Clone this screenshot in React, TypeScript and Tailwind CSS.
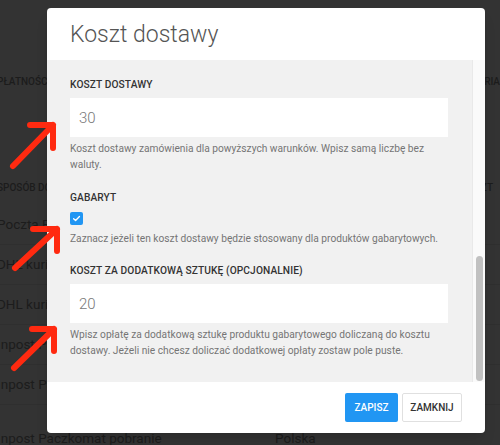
import React from "react";

const deliveryRows = [
  "Poczta Polska",
  "DHL kurier",
  "DHL kurier pobranie",
  "Inpost Paczkomat",
  "Inpost Paczkomat 24/7",
];

const Field = ({ label, value, help }: { label: string; value: string; help: string }) => (
  <div>
    <div className="text-[10.2px] leading-4 font-medium uppercase text-[#333] tracking-[0.1px]">{label}</div>
    <input
      defaultValue={value}
      className="mt-[5px] block w-full h-[39px] bg-white px-[9px] text-[15px] font-light text-[#777] outline-none"
    />
    <p className="mt-[4px] text-[10.2px] leading-4 text-[#757575]">{help}</p>
  </div>
);

const App = () => {
  return (
    <div className="relative w-[500px] h-[445px] overflow-hidden bg-[#333] font-['Roboto',sans-serif]">
      {/* page behind the dimmed overlay */}
      <div className="pt-[73px] -ml-[3px] text-[#1c1c1c] whitespace-nowrap">
        <div className="flex h-4 items-center text-[10px] uppercase font-medium">
          <div className="w-[278px]">Płatności</div>
          <div className="w-[212px]">Kraj</div>
          <div>Kategoria</div>
        </div>
        <div className="mt-[90px] flex h-4 items-center text-[10px] uppercase font-medium">
          <div className="w-[278px]">Sposób dostawy</div>
          <div className="w-[212px]">Kraj</div>
          <div className="w-[6px] flex justify-end">Koszt</div>
        </div>
        <div className="mt-[10px]">
          {deliveryRows.map((row) => (
            <div key={row} className="flex h-10 items-center text-[13.5px] border-b border-[#2f2f2f]">
              <div className="w-[278px]">{row}</div>
              <div>Polska</div>
            </div>
          ))}
          <div className="flex h-10 items-center text-[13.5px] mt-[13px]">
            <div className="w-[278px]">Inpost Paczkomat pobranie</div>
            <div>Polska</div>
          </div>
        </div>
      </div>

      {/* modal */}
      <div className="absolute left-[47px] top-[8px] w-[438px] h-[425px] bg-white rounded-[4px] flex flex-col overflow-hidden shadow-lg">
        <div className="h-[52px] shrink-0 px-[23px] flex items-center">
          <h2 className="text-[23px] leading-none font-light text-[#555]">Koszt dostawy</h2>
        </div>

        <div className="flex flex-1 min-h-0 bg-[#f1f1f1]">
          <div className="flex-1 pl-[23px] pr-[24px] pt-[17px]">
            <Field
              label="Koszt dostawy"
              value="30"
              help="Koszt dostawy zamówienia dla powyższych warunków. Wpisz samą liczbę bez waluty."
            />

            <div className="mt-[17px]">
              <div className="text-[10.2px] leading-4 font-medium uppercase text-[#333] tracking-[0.1px]">Gabaryt</div>
              <div className="mt-[6px] w-[13px] h-[13px] rounded-[2px] bg-[#2196f3] flex items-center justify-center">
                <svg width="9" height="9" viewBox="0 0 10 10" fill="none">
                  <path d="M1.8 5.2 4 7.3 8.3 2.8" stroke="white" strokeWidth="1.5" strokeLinecap="round" strokeLinejoin="round" />
                </svg>
              </div>
              <p className="mt-[6px] text-[10.2px] leading-4 text-[#757575]">
                Zaznacz jeżeli ten koszt dostawy będzie stosowany dla produktów gabarytowych.
              </p>
            </div>

            <div className="mt-[16px]">
              <Field
                label="Koszt za dodatkową sztukę (opcjonalnie)"
                value="20"
                help="Wpisz opłatę za dodatkową sztukę produktu gabarytowego doliczaną do kosztu dostawy. Jeżeli nie chcesz doliczać dodatkowej opłaty zostaw pole puste."
              />
            </div>
          </div>

          {/* scrollbar */}
          <div className="w-[13px] shrink-0 bg-[#fafafa] border-l border-[#e9e9e9] flex flex-col justify-end items-center pb-[1px]">
            <div className="w-[7px] h-[125px] rounded-full bg-[#c1c1c1]" />
          </div>
        </div>

        <div className="h-[51px] shrink-0 flex items-center justify-end gap-[4px] pr-[23px]">
          <button className="w-[53px] h-[29px] rounded-[2px] bg-[#2196f3] text-white text-[10px] font-medium uppercase">
            Zapisz
          </button>
          <button className="w-[60px] h-[29px] rounded-[2px] bg-white border border-[#e0e0e0] text-[#333] text-[10px] font-medium uppercase">
            Zamknij
          </button>
        </div>
      </div>

      {/* red annotation arrows */}
      <svg className="absolute inset-0 pointer-events-none" width="500" height="445" viewBox="0 0 500 445" fill="none">
        <g stroke="#ff2a10" strokeWidth="6" strokeLinecap="round" strokeLinejoin="round">
          <path d="M13 166 53 125M30 125H53V148" />
          <path d="M15 268 57 229M33 229H57V251" />
          <path d="M14 368 54 329M32 329H54V351" />
        </g>
      </svg>
    </div>
  );
};

export default App;
